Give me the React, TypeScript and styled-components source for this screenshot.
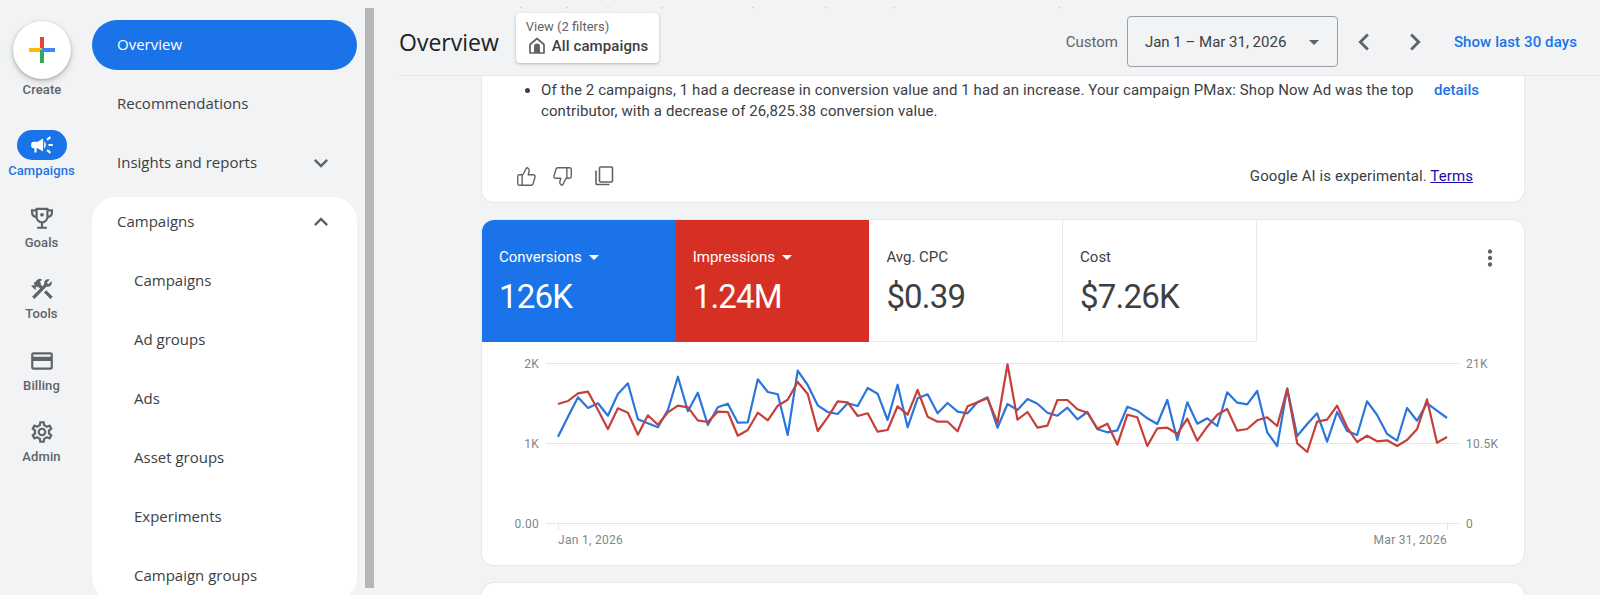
import React from "react";
import styled, { createGlobalStyle } from "styled-components";
import {
  MdCampaign,
  MdConstruction,
  MdOutlineCreditCard,
  MdOutlineSettings,
  MdExpandMore,
  MdExpandLess,
  MdChevronLeft,
  MdChevronRight,
  MdArrowDropDown,
  MdMoreVert,
} from "react-icons/md";
import { ThumbsUp, ThumbsDown } from "lucide-react";

const Global = createGlobalStyle`
  html, body { margin: 0; padding: 0; background: #f1f3f4; }
  * { box-sizing: border-box; }
  body { font-family: Roboto, "Liberation Sans", sans-serif; color: #3c4043; }
`;

const Page = styled.div`
  position: relative;
  display: flex;
  width: 1600px;
  height: 595px;
  overflow: hidden;
  background: #f1f3f4;
`;

const Specks = styled.svg`
  position: absolute;
  left: 0;
  top: 0;
  pointer-events: none;
`;

const Rail = styled.nav`
  width: 84px;
  flex: none;
  display: flex;
  flex-direction: column;
  align-items: center;
  padding-top: 21px;
`;

const CreateCircle = styled.div`
  width: 58px;
  height: 58px;
  border-radius: 50%;
  background: #fff;
  box-shadow: 0 1px 3px rgba(60, 64, 67, 0.3), 0 3px 7px rgba(60, 64, 67, 0.2);
  display: flex;
  align-items: center;
  justify-content: center;
`;

const RailLabel = styled.span<{ $active?: boolean }>`
  font-size: 13px;
  line-height: 16px;
  font-weight: 500;
  letter-spacing: 0.1px;
  color: ${(p) => (p.$active ? "#1a73e8" : "#5f6368")};
`;

const CreateLabel = styled(RailLabel)`
  margin-top: 3px;
  margin-bottom: 32px;
`;

const RailItem = styled.div`
  display: flex;
  flex-direction: column;
  align-items: center;
  height: 71.5px;
  padding-right: 1px;
  color: #5f6368;
`;

const IconPill = styled.div<{ $active?: boolean }>`
  width: 50px;
  height: 30px;
  margin-bottom: 3px;
  border-radius: 15px;
  display: flex;
  align-items: center;
  justify-content: center;
  padding-top: ${(p) => (p.$active ? "0" : "2px")};
  background: ${(p) => (p.$active ? "#1a73e8" : "transparent")};
  color: ${(p) => (p.$active ? "#fff" : "#5f6368")};
`;

const NavColumn = styled.div`
  width: 265px;
  flex: none;
  margin-left: 8px;
  padding-top: 20px;
  display: flex;
  flex-direction: column;
  gap: 9px;
`;

const NavRow = styled.div<{ $active?: boolean; $sub?: boolean }>`
  height: 50px;
  flex: none;
  border-radius: 25px;
  display: flex;
  align-items: center;
  justify-content: space-between;
  padding: 0 22px 0 ${(p) => (p.$sub ? "42px" : "25px")};
  font-family: "Open Sans", Roboto, sans-serif;
  font-size: 15px;
  font-weight: 500;
  background: ${(p) => (p.$active ? "#1a73e8" : "transparent")};
  color: ${(p) => (p.$active ? "#fff" : "#3c4043")};
`;

const NavText = styled.span`
  position: relative;
  top: -1px;
`;

const NavPanel = styled.div`
  background: #fff;
  border-radius: 24px;
  display: flex;
  flex-direction: column;
  gap: 9px;
`;

const ScrollThumb = styled.div`
  width: 9px;
  flex: none;
  margin: 8px 0 7px 8px;
  background: #b5b6b8;
`;

const Main = styled.main`
  flex: 1;
  min-width: 0;
  margin-left: 25px;
  display: flex;
  flex-direction: column;
`;

const Header = styled.header`
  height: 76px;
  flex: none;
  border-bottom: 1px solid #e3e5e8;
  display: flex;
  align-items: center;
  padding: 8px 23px 0 0;
`;

const Title = styled.h1`
  margin: 0;
  font-family: "Open Sans", Roboto, sans-serif;
  font-size: 23px;
  font-weight: 400;
  color: #202124;
`;

const ViewChip = styled.div`
  width: 143px;
  height: 50px;
  margin: 0 0 8px 17px;
  padding: 6px 10px;
  background: #fff;
  border-radius: 4px;
  box-shadow: 0 1px 3px rgba(60, 64, 67, 0.35);
  display: flex;
  flex-direction: column;
`;

const ViewCaption = styled.span`
  font-size: 13px;
  line-height: 15px;
  color: #5f6368;
`;

const ViewName = styled.span`
  display: flex;
  align-items: center;
  gap: 7px;
  margin-top: 3px;
  padding-left: 3px;
  font-size: 15px;
  line-height: 18px;
  font-weight: 500;
  letter-spacing: 0.1px;
  color: #3c4043;
`;

const DateGroup = styled.div`
  margin-left: auto;
  display: flex;
  align-items: center;
`;

const CustomLabel = styled.span`
  font-size: 15px;
  color: #5f6368;
  margin-right: 9px;
`;

const DateBox = styled.div`
  width: 211px;
  height: 51px;
  border: 1px solid #9aa0a6;
  border-radius: 4px;
  display: flex;
  align-items: center;
  justify-content: space-between;
  padding: 0 11px 0 17px;
  font-size: 15px;
  color: #3c4043;
`;

const ArrowSlot = styled.span<{ $gap: number }>`
  display: flex;
  margin-left: ${(p) => p.$gap}px;
  color: #5f6368;
`;

const ShowLast = styled.a`
  margin-left: 22px;
  font-size: 15px;
  font-weight: 500;
  letter-spacing: 0.1px;
  color: #1a73e8;
`;

const Content = styled.div`
  flex: 1;
  min-height: 0;
  padding: 0 76px 0 83px;
  display: flex;
  flex-direction: column;
  gap: 18px;
`;

const Card = styled.section`
  flex: none;
  background: #fff;
  border-radius: 12px;
  box-shadow: 0 0 0 1px #e6e8ea;
`;

const SummaryCard = styled(Card)`
  height: 126px;
  border-radius: 0 0 12px 12px;
  display: flex;
  flex-direction: column;
`;

const SummaryTop = styled.div`
  display: flex;
  align-items: flex-start;
  height: 76px;
  padding: 4px 44px 0 41px;
`;

const Bullets = styled.ul`
  flex: 1;
  margin: 0;
  padding: 0 0 0 18px;
  font-size: 15px;
  line-height: 21px;
  letter-spacing: 0.1px;
  color: #3c4043;
`;

const DetailsLink = styled.a`
  width: 46px;
  flex: none;
  margin-left: 18px;
  font-size: 15px;
  line-height: 21px;
  font-weight: 500;
  color: #1a73e8;
`;

const SummaryFoot = styled.div`
  display: flex;
  align-items: center;
  padding: 0 51px 0 34px;
  height: 48px;
  color: #5f6368;
`;

const FootIcon = styled.span<{ $gap?: number }>`
  display: flex;
  margin-left: ${(p) => p.$gap ?? 0}px;
`;

const Disclaimer = styled.span`
  margin-left: auto;
  font-size: 15px;
  letter-spacing: 0.1px;
  color: #3c4043;
`;

const TermsLink = styled.a`
  color: #1a0dab;
  text-decoration: underline;
`;

const ChartCard = styled(Card)`
  height: 345px;
  overflow: hidden;
  display: flex;
  flex-direction: column;
`;

const TabRow = styled.div`
  height: 122px;
  flex: none;
  display: flex;
`;

const MetricTab = styled.div<{ $bg?: string }>`
  width: 193.7px;
  flex: none;
  padding: 27px 17px 0;
  background: ${(p) => p.$bg ?? "#fff"};
  color: ${(p) => (p.$bg ? "#fff" : "#3c4043")};
  border-right: ${(p) => (p.$bg ? "none" : "1px solid #e8eaed")};
  border-bottom: ${(p) => (p.$bg ? "none" : "1px solid #e8eaed")};
`;

const MetricName = styled.div`
  display: flex;
  align-items: center;
  height: 20px;
  font-size: 15px;
`;

const MetricValue = styled.div`
  margin-top: 9px;
  font-size: 33px;
  line-height: 42px;
  font-weight: 400;
  letter-spacing: -0.8px;
`;

const MoreSlot = styled.div`
  margin-left: auto;
  padding: 25px 21px 0 0;
  color: #5f6368;
  display: flex;
`;

const NextCard = styled(Card)`
  height: 40px;
`;

const blueRaw = [
  290, 230, 172, 204, 190, 227, 162, 130, 238, 250, 262, 210, 110, 214, 158, 255, 202, 191, 248, 247, 118, 156, 163, 285,
  92, 135, 196, 216, 222, 190, 198, 144, 161, 240, 134, 262, 175, 163, 220, 189, 215, 220, 187, 172, 263, 192, 210, 177,
  191, 218, 227, 203, 238, 216, 268, 277, 271, 200, 212, 235, 252, 180, 300, 187, 251, 235, 258, 157, 188, 193, 153, 277,
  318, 145, 288, 252, 220, 305, 216, 273, 285, 184, 225, 282, 302, 204, 242, 190, 212, 234,
];
const redRaw = [
  192, 183, 160, 155, 210, 267, 205, 218, 284, 226, 254, 217, 197, 202, 241, 246, 215, 216, 287, 270, 218, 241, 197, 179,
  126, 162, 273, 232, 184, 187, 228, 220, 275, 270, 199, 224, 150, 230, 245, 245, 274, 199, 187, 175, 248, 73, 239, 216,
  263, 257, 180, 180, 208, 218, 266, 251, 314, 224, 232, 318, 265, 263, 282, 236, 302, 260, 224, 207, 272, 267, 241, 232,
  258, 147, 310, 336, 245, 239, 197, 262, 306, 287, 304, 301, 318, 300, 268, 178, 308, 291,
];

// The svg starts at the card's left edge (x=482) and 342 on the page.
const toPoints = (raw: number[]) =>
  raw.map((py, i) => `${(76 + (i * 889) / 89).toFixed(1)},${(py / 3 - 2).toFixed(1)}`).join(" ");

const gridYs = [21.5, 101.5, 181.5];
const axisStyle = { fontFamily: "Roboto, sans-serif", fontSize: 12, letterSpacing: 0.3, fill: "#80868b" };
const speckXs = [521, 567, 608, 662, 753, 826, 894, 1059];

function PerformanceChart() {
  return (
    <svg width="1042" height="223" viewBox="0 0 1042 223" style={{ display: "block" }}>
      {gridYs.map((y) => (
        <line key={y} x1="64" x2="977" y1={y} y2={y} stroke="#e3e5e8" strokeWidth="1" />
      ))}
      <line x1="76.5" x2="76.5" y1="182" y2="188" stroke="#e3e5e8" />
      <line x1="965.5" x2="965.5" y1="182" y2="188" stroke="#e3e5e8" />
      <text x="57" y="26" textAnchor="end" style={axisStyle}>2K</text>
      <text x="57" y="106" textAnchor="end" style={axisStyle}>1K</text>
      <text x="57" y="186" textAnchor="end" style={axisStyle}>0.00</text>
      <text x="984" y="26" style={axisStyle}>21K</text>
      <text x="984" y="106" style={axisStyle}>10.5K</text>
      <text x="984" y="186" style={axisStyle}>0</text>
      <text x="76" y="202" style={axisStyle}>Jan 1, 2026</text>
      <text x="965" y="202" textAnchor="end" style={axisStyle}>Mar 31, 2026</text>
      <polyline points={toPoints(blueRaw)} fill="none" stroke="#2a76dc" strokeWidth="2.2" strokeLinejoin="round" />
      <polyline points={toPoints(redRaw)} fill="none" stroke="#c6403a" strokeWidth="2.2" strokeLinejoin="round" />
    </svg>
  );
}

function GooglePlus() {
  return (
    <svg width="26" height="26" viewBox="0 0 26 26">
      <rect x="11" y="0" width="4" height="13" fill="#ea4335" />
      <rect x="0" y="11" width="13" height="4" fill="#fbbc04" />
      <rect x="11" y="13" width="4" height="13" fill="#34a853" />
      <rect x="13" y="11" width="13" height="4" fill="#4285f4" />
    </svg>
  );
}

function TrophyIcon({ size = 26 }: { size?: number }) {
  return (
    <svg width={size} height={size} viewBox="0 0 24 24" fill="none" stroke="currentColor" strokeWidth="2">
      <path d="M7 3.5h10v7.5a5 5 0 0 1-10 0z" />
      <path d="M7 5H2.8v2.2A3.8 3.8 0 0 0 7 11" />
      <path d="M17 5h4.2v2.2A3.8 3.8 0 0 1 17 11" />
      <path d="M12 16v4M7.5 21h9" />
      <circle cx="12" cy="9" r="1.7" fill="currentColor" stroke="none" />
    </svg>
  );
}

function HouseIcon() {
  return (
    <svg width="16" height="17" viewBox="0 0 16 17" style={{ flex: "none" }}>
      <path d="M1 7.5 8 1.5l7 6V16H1z" fill="none" stroke="#5f6368" strokeWidth="1.7" strokeLinejoin="round" />
      <path d="M5 9.5a3 3 0 0 1 6 0V16H5z" fill="#5f6368" />
    </svg>
  );
}

function CopyIcon() {
  return (
    <svg width="20" height="20" viewBox="0 0 20 20" fill="none" stroke="#5f6368" strokeWidth="1.6">
      <rect x="5.5" y="1" width="13" height="15" rx="1" />
      <path d="M2 4.5V17.5a1 1 0 0 0 1 1H15.5" />
    </svg>
  );
}

const railItems = [
  { label: "Goals", Icon: TrophyIcon },
  { label: "Tools", Icon: MdConstruction },
  { label: "Billing", Icon: MdOutlineCreditCard },
  { label: "Admin", Icon: MdOutlineSettings },
];

const subItems = ["Campaigns", "Ad groups", "Ads", "Asset groups", "Experiments", "Campaign groups"];

export default function App() {
  return (
    <Page>
      <Global />
      <Rail>
        <CreateCircle>
          <GooglePlus />
        </CreateCircle>
        <CreateLabel>Create</CreateLabel>
        <RailItem>
          <IconPill $active>
            <MdCampaign size={26} />
          </IconPill>
          <RailLabel $active>Campaigns</RailLabel>
        </RailItem>
        {railItems.map(({ label, Icon }) => (
          <RailItem key={label}>
            <IconPill>
              <Icon size={26} />
            </IconPill>
            <RailLabel>{label}</RailLabel>
          </RailItem>
        ))}
      </Rail>

      <NavColumn>
        <NavRow $active>
          <NavText>Overview</NavText>
        </NavRow>
        <NavRow>
          <NavText>Recommendations</NavText>
        </NavRow>
        <NavRow>
          <NavText>Insights and reports</NavText>
          <MdExpandMore size={28} color="#5f6368" />
        </NavRow>
        <NavPanel>
          <NavRow>
            <NavText>Campaigns</NavText>
            <MdExpandLess size={28} color="#5f6368" />
          </NavRow>
          {subItems.map((s) => (
            <NavRow $sub key={s}>
              <NavText>{s}</NavText>
            </NavRow>
          ))}
        </NavPanel>
      </NavColumn>

      <ScrollThumb />

      <Main>
        <Header>
          <Title>Overview</Title>
          <ViewChip>
            <ViewCaption>View (2 filters)</ViewCaption>
            <ViewName>
              <HouseIcon />
              All campaigns
            </ViewName>
          </ViewChip>
          <DateGroup>
            <CustomLabel>Custom</CustomLabel>
            <DateBox>
              Jan 1 – Mar 31, 2026
              <MdArrowDropDown size={24} color="#5f6368" />
            </DateBox>
            <ArrowSlot $gap={9}>
              <MdChevronLeft size={34} />
            </ArrowSlot>
            <ArrowSlot $gap={17}>
              <MdChevronRight size={34} />
            </ArrowSlot>
            <ShowLast>Show last 30 days</ShowLast>
          </DateGroup>
        </Header>
        <Content>
          <SummaryCard>
            <SummaryTop>
              <Bullets>
                <li>
                  Of the 2 campaigns, 1 had a decrease in conversion value and 1 had an increase. Your campaign PMax: Shop
                  Now Ad was the top contributor, with a decrease of 26,825.38 conversion value.
                </li>
              </Bullets>
              <DetailsLink>details</DetailsLink>
            </SummaryTop>
            <SummaryFoot>
              <FootIcon>
                <ThumbsUp size={21} strokeWidth={1.6} />
              </FootIcon>
              <FootIcon $gap={15}>
                <ThumbsDown size={21} strokeWidth={1.6} />
              </FootIcon>
              <FootIcon $gap={21}>
                <CopyIcon />
              </FootIcon>
              <Disclaimer>
                Google AI is experimental. <TermsLink>Terms</TermsLink>
              </Disclaimer>
            </SummaryFoot>
          </SummaryCard>

          <ChartCard>
            <TabRow>
              <MetricTab $bg="#1a73e8">
                <MetricName>
                  Conversions
                  <MdArrowDropDown size={24} />
                </MetricName>
                <MetricValue>126K</MetricValue>
              </MetricTab>
              <MetricTab $bg="#d63025">
                <MetricName>
                  Impressions
                  <MdArrowDropDown size={24} />
                </MetricName>
                <MetricValue>1.24M</MetricValue>
              </MetricTab>
              <MetricTab>
                <MetricName>Avg. CPC</MetricName>
                <MetricValue>$0.39</MetricValue>
              </MetricTab>
              <MetricTab>
                <MetricName>Cost</MetricName>
                <MetricValue>$7.26K</MetricValue>
              </MetricTab>
              <MoreSlot>
                <MdMoreVert size={26} />
              </MoreSlot>
            </TabRow>
            <PerformanceChart />
          </ChartCard>

          <NextCard />
        </Content>
      </Main>

      <Specks width="1100" height="10" viewBox="0 0 1100 10">
        {speckXs.map((x) => (
          <circle key={x} cx={x} cy="7.7" r="0.8" fill="#c4c7ca" />
        ))}
      </Specks>
    </Page>
  );
}
